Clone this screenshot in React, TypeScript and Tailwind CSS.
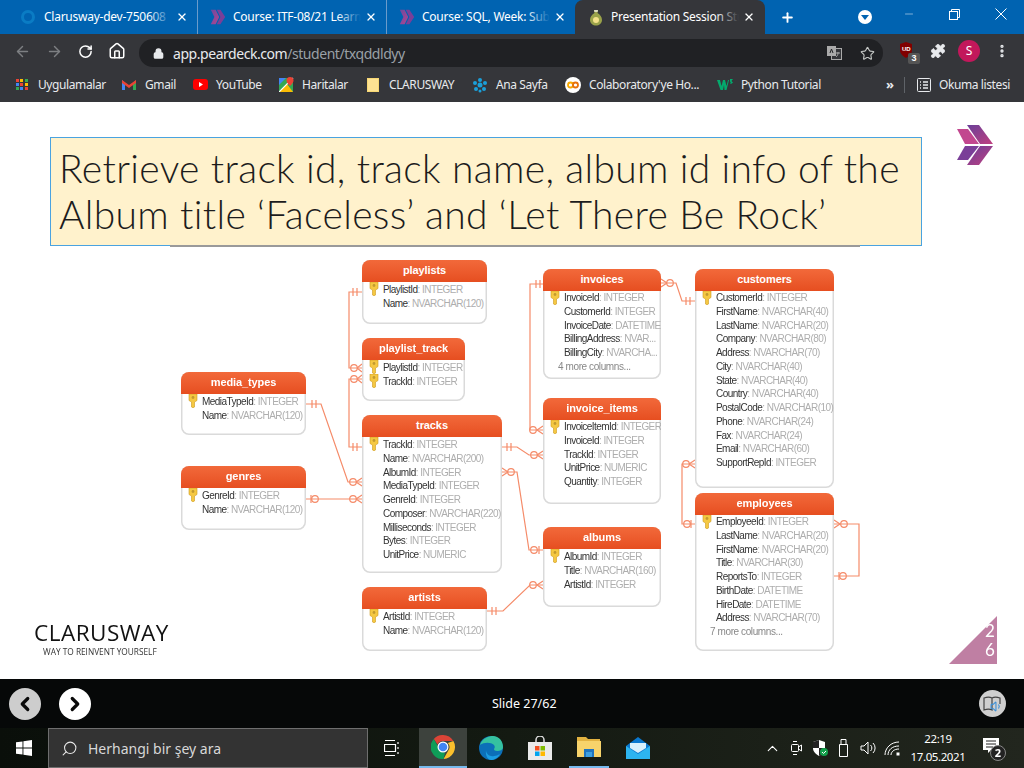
import React from "react";
import { ArrowLeft, ArrowRight, RotateCw, Home, Lock, Star, Puzzle, X, Plus, Minus, ChevronLeft, ChevronRight, ChevronUp, Search, Volume1, EllipsisVertical } from "lucide-react";

const ui = "font-['Noto_Sans','Open_Sans',sans-serif]";

function PearLogo({ c = "#7b3f98" }: { c?: string }) {
  return (
    <svg width="18" height="16" viewBox="0 0 36 40">
      <defs>
        <linearGradient id="tabch" x1="0" y1="0" x2="1" y2="1">
          <stop offset="0" stopColor="#6d4aa0" />
          <stop offset="1" stopColor="#b2458f" />
        </linearGradient>
      </defs>
      <path d="M0 2h12l9 18-9 18H0l9-18z" fill="url(#tabch)" />
      <path d="M15 2h9l12 18-12 18h-9l9-18z" fill={c} />
    </svg>
  );
}

function Tab({ title, icon, sep = true, active = false, w = "w-[189px]", pl = "pl-[11px]" }: { title: string; icon: React.ReactNode; sep?: boolean; active?: boolean; w?: string; pl?: string }) {
  return (
    <div className={`relative flex items-center h-[34px] shrink-0 ${w} ${pl} ${active ? "bg-[#35363a] rounded-t-[8px]" : ""} ${sep ? "border-r border-[#6a9bcb]" : ""}`}>
      <div className="w-[18px] flex justify-center shrink-0">{icon}</div>
      <div className="relative ml-[6px] w-[128px] overflow-hidden whitespace-nowrap text-[12px] tracking-[-0.25px] text-white leading-[34px]">
        {title}
        <div className={`absolute right-0 top-0 bottom-0 w-[24px] bg-gradient-to-r from-transparent ${active ? "to-[#35363a]" : "to-[#0063b1]"}`} />
      </div>
      <X size={12} strokeWidth={2.6} className="text-white ml-[4px] shrink-0" />
    </div>
  );
}

function TabBar() {
  return (
    <div className="flex items-center h-[34px] bg-[#0063b1]">
      <Tab
        title="Clarusway-dev-750608"
        w="w-[198px]"
        pl="pl-[20px]"
        icon={<svg width="16" height="16" viewBox="0 0 16 16"><circle cx="7" cy="8" r="5.500" fill="none" stroke="#0a7cc4" strokeWidth="3" /></svg>}
      />
      <Tab title="Course: ITF-08/21 Learn" icon={<PearLogo />} />
      <Tab title="Course: SQL, Week: Sub" icon={<PearLogo />} w="w-[188px]" sep={false} />
      <Tab
        title="Presentation Session Stu"
        active
        w="w-[190px]"
        pl="pl-[12px]"
        sep={false}
        icon={
          <svg width="14" height="19" viewBox="0 0 14 17">
            <path d="M5 1h4L8.500 4C11 5.500 13 8 13 11c0 3.500-3 5.500-6 5.500S1 14.500 1 11c0-3 2-5.500 4.500-7z" fill="#9aa24a" />
            <circle cx="7" cy="11" r="3" fill="#f4e28a" />
            <path d="M5 1h4l-.4 2H5.400z" fill="#d9d9c0" />
          </svg>
        }
      />
      <Plus size={15} strokeWidth={3} className="text-white ml-[15px]" />
      <div className="flex-1" />
      <div className="w-[14px] h-[14px] rounded-full bg-white flex items-center justify-center mr-[31px]">
        <div className="w-0 h-0 border-l-[4px] border-r-[4px] border-t-[5px] border-l-transparent border-r-transparent border-t-[#0063b1]" />
      </div>
      <Minus size={12} strokeWidth={1} className="text-white mr-[34px] -mt-[6px]" />
      <svg width="11" height="11" viewBox="0 0 11 11" className="mr-[35px] -mt-[6px]" fill="none" stroke="#fff">
        <rect x="0.5" y="2.5" width="8" height="8" />
        <path d="M2.500 2.500V.5h8v8H8.500" />
      </svg>
      <svg width="12" height="12" viewBox="0 0 12 12" className="mr-[17px] -mt-[6px]" stroke="#fff"><path d="M.5.5l11 11M11.500.5l-11 11" /></svg>
    </div>
  );
}

function Toolbar() {
  return (
    <div className="flex items-center h-[34px] bg-[#35363a]">
      <ArrowLeft size={17} strokeWidth={2} className="text-[#7d7f82] ml-[14px]" />
      <ArrowRight size={17} strokeWidth={2} className="text-[#7d7f82] ml-[15px]" />
      <RotateCw size={15} strokeWidth={2.400} className="text-white ml-[15px]" />
      <Home size={18} strokeWidth={2} className="text-white ml-[15px]" />
      <div className="ml-[13px] mt-[4px] flex items-center w-[744px] h-[28px] rounded-full bg-[#202124] pl-[14px] pr-[8px]">
        <Lock size={11} strokeWidth={3} fill="#e8eaed" className="text-[#e8eaed]" />
        <div className="ml-[9px] text-[14px] tracking-[-0.45px] text-[#9aa0a6] whitespace-nowrap">
          <span className="text-[#e8eaed]">app.peardeck.com</span>/student/txqddldyy
        </div>
        <div className="flex-1" />
        <svg width="15" height="14" viewBox="0 0 15 14" className="mr-[18px]">
          <rect x="4.500" y="2.500" width="10" height="11" fill="#35363a" stroke="#aaa" />
          <rect x="0" y="0" width="9" height="10" fill="#aaa" />
          <path d="M3 7l1.500-4L6 7" stroke="#202124" fill="none" />
          <path d="M9 7h4M11 6v1c0 2-1 3-2 4" stroke="#aaa" fill="none" />
        </svg>
        <Star size={15} strokeWidth={1.800} className="text-[#c4c7c5]" />
      </div>
      <div className="relative ml-[16px] w-[16px] h-[18px]">
        <svg width="14" height="16" viewBox="0 0 14 16"><path d="M1 2l6-2 6 2v6c0 4-3 6-6 8-3-2-6-4-6-8z" fill="#800000" /></svg>
        <span className="absolute left-[3px] top-[2px] text-[6px] font-bold leading-[10px] text-white font-['Liberation_Sans',sans-serif]">UD</span>
        <span className="absolute left-[9px] top-[11px] w-[12px] h-[11px] bg-[#555] rounded-[2px] text-[9px] leading-[11px] text-center text-white font-['Liberation_Sans',sans-serif] font-bold">3</span>
      </div>
      <Puzzle size={16} fill="#e8eaed" strokeWidth={1} className="text-[#e8eaed] ml-[15px]" />
      <div className="ml-[12px] w-[22px] h-[22px] rounded-full bg-[#c2185b] text-white text-[12px] flex items-center justify-center">S</div>
      <EllipsisVertical size={16} strokeWidth={3} className="text-[#e8eaed] ml-[14px]" />
    </div>
  );
}

function Bookmark({ icon, label, w }: { icon: React.ReactNode; label: string; w: string }) {
  return (
    <div className={`flex items-center shrink-0 ${w}`}>
      <div className="w-[16px] flex justify-center shrink-0">{icon}</div>
      <span className="ml-[8px] text-[12px] tracking-[-0.4px] text-[#e8eaed] whitespace-nowrap">{label}</span>
    </div>
  );
}

function Bookmarks() {
  const colors = ["#ea4335", "#fbbc04", "#34a853", "#4285f4", "#ea4335", "#fbbc04", "#34a853", "#4285f4", "#ea4335"];
  return (
    <div className="flex items-center h-[34px] bg-[#35363a] pl-[14px] pb-[1px]">
      <Bookmark
        w="w-[107px]"
        label="Uygulamalar"
        icon={
          <div className="grid grid-cols-3 gap-[1px] w-[13px]">
            {colors.map((c, i) => (
              <div key={i} className="w-[3px] h-[3px]" style={{ backgroundColor: c }} />
            ))}
          </div>
        }
      />
      <Bookmark
        w="w-[71px]"
        label="Gmail"
        icon={
          <svg width="14" height="11" viewBox="0 0 14 11">
            <path d="M0 1v10h3V4z" fill="#4285f4" />
            <path d="M14 1v10h-3V4z" fill="#34a853" />
            <path d="M0 1l7 5 7-5v3L7 9 0 4z" fill="#ea4335" />
          </svg>
        }
      />
      <Bookmark
        w="w-[86px]"
        label="YouTube"
        icon={
          <svg width="15" height="11" viewBox="0 0 15 11">
            <rect width="15" height="11" rx="3" fill="#f00" />
            <path d="M6 3l4 2.500L6 8z" fill="#fff" />
          </svg>
        }
      />
      <Bookmark
        w="w-[87px]"
        label="Haritalar"
        icon={
          <svg width="15" height="15" viewBox="0 0 15 15">
            <rect width="14" height="14" y="1" fill="#34a853" />
            <path d="M0 15L8 7l6 8z" fill="#fbbc04" />
            <path d="M0 1h7L0 8z" fill="#4285f4" />
            <path d="M0 15L14 1" stroke="#fff" strokeWidth="1.200" />
            <path d="M11 0a3.500 3.500 0 0 1 3.500 3.500C14.500 6 11 9 11 9S7.500 6 7.500 3.500A3.500 3.500 0 0 1 11 0z" fill="#ea4335" />
          </svg>
        }
      />
      <Bookmark
        w="w-[107px]"
        label="CLARUSWAY"
        icon={<div className="w-[12px] h-[14px] bg-[#fde293] border border-[#f7d774]" />}
      />
      <Bookmark
        w="w-[93px]"
        label="Ana Sayfa"
        icon={
          <svg width="16" height="16" viewBox="0 0 16 16" fill="#1a9fd8">
            <circle cx="8" cy="3" r="2" /><circle cx="3" cy="6" r="2" /><circle cx="13" cy="6" r="2" /><circle cx="8" cy="8" r="2.500" /><circle cx="4" cy="12" r="2" /><circle cx="12" cy="12" r="2" /><circle cx="8" cy="14" r="1.500" />
          </svg>
        }
      />
      <Bookmark
        w="w-[152px]"
        label="Colaboratory'ye Ho..."
        icon={
          <svg width="16" height="16" viewBox="0 0 16 16">
            <circle cx="8" cy="8" r="8" fill="#fff" />
            <circle cx="5.500" cy="8" r="2.500" fill="none" stroke="#f9ab00" strokeWidth="1.800" />
            <circle cx="10.500" cy="8" r="2.500" fill="none" stroke="#e8710a" strokeWidth="1.800" />
          </svg>
        }
      />
      <Bookmark
        w="w-[169px]"
        label="Python Tutorial"
        icon={
          <svg width="16" height="12" viewBox="0 0 16 12">
            <path d="M0 1h3l1.500 6L6 1h2l1.500 6L11 1h1L9.500 11h-2L7 6l-1 5H3.500z" fill="#04aa6d" />
            <path d="M13 0h3l-1.500 2L16 3.500 14 5l-1-.8.8-.7-.8-1z" fill="#04aa6d" />
          </svg>
        }
      />
      <span className="text-[#e8eaed] text-[13px] font-bold w-[18px]">»</span>
      <div className="w-px h-[16px] bg-[#5f6368] mr-[12px]" />
      <svg width="14" height="14" viewBox="0 0 14 14" fill="none" stroke="#e8eaed">
        <rect x=".5" y=".5" width="13" height="13" rx="1" />
        <path d="M3 4h1M3 7h1M3 10h1M6 4h5M6 7h5M6 10h5" strokeWidth="1.400" />
      </svg>
      <span className="ml-[8px] text-[12px] tracking-[-0.4px] text-[#e8eaed] whitespace-nowrap">Okuma listesi</span>
    </div>
  );
}

function Key({ className }: { className: string }) {
  return (
    <svg width="10" height="14" viewBox="0 0 10 14" className={`absolute ${className}`}>
      <path d="M1 0h8v6.500L6.500 8v5L5 14 3.500 13V8L1 6.500z" fill="#f5c842" stroke="#cf9a22" strokeWidth=".6" />
      <circle cx="5" cy="3.500" r="1.400" fill="#c39a30" />
    </svg>
  );
}

type Row = [string, string];

function Table({ title, rows, more, keys = 1, pt = "pt-[1px]", className }: { title: string; rows: Row[]; more?: string; keys?: number; pt?: string; className: string }) {
  return (
    <div className={`absolute bg-white rounded-[8px] shadow-[inset_0_0_0_1.5px_#dadada] ${className}`}>
      <div className="h-[22px] rounded-t-[8px] bg-gradient-to-b from-[#f2693a] to-[#e64e20] text-center text-white font-bold text-[11px] leading-[21px] tracking-[-0.1px]">
        {title}
      </div>
      <Key className="left-[7px] top-[22px]" />
      {keys > 1 && <Key className="left-[7px] top-[36px]" />}
      <div className={`overflow-hidden rounded-b-[8px] pl-[21px] pr-[1px] ${pt}`}>
        {rows.map(([n, t]) => (
          <div key={n} className="h-[13.750px] leading-[13.750px] text-[10px] tracking-[-0.55px] whitespace-nowrap">
            <span className="text-[#333]">{n}</span>
            <span className="text-[#aeaeae]">: {t}</span>
          </div>
        ))}
        {more && <div className="h-[13.750px] leading-[13.750px] text-[10px] tracking-[-0.4px] -ml-[6px] text-[#888]">{more}</div>}
      </div>
    </div>
  );
}

function Links() {
  const c = (x: number, y: number) => <circle cx={x} cy={y} r="3.300" />;
  return (
    <svg viewBox="0 102 1024 577" width="1024" height="577" className="absolute left-0 top-0" fill="none" stroke="#f58b69" strokeWidth="1.200">
      <path d="M362 292H349V368H362" />
      <path d="M353 288v8M357 288v8" />
      <path d="M362 379H349V447H362" />
      <path d="M353 443v8M357 443v8" />
      {c(354, 368)}
      {c(354, 379)}
      <path d="M357 368l5-4M357 368l5 4M357 379l5-4M357 379l5 4" />
      <path d="M306 404H321L348 482H362" />
      <path d="M312 400v8M316 400v8" />
      {c(353, 482)}
      <path d="M356 482l6-4M356 482l6 4" />
      <path d="M306 499H362" />
      <path d="M311 495v8" />
      {c(315, 499)}
      {c(353, 499)}
      <path d="M356 499l6-4M356 499l6 4" />
      <path d="M502 447H517L529 455H543" />
      <path d="M507 443v8M511 443v8" />
      {c(534, 455)}
      <path d="M537 455l6-4M537 455l6 4" />
      <path d="M502 472H517L529 550H543" />
      <path d="M502 468l6 4M502 476l6-4" />
      {c(511, 472)}
      {c(534, 550)}
      <path d="M539 546v8" />
      <path d="M487 611H503L530 585H543" />
      <path d="M492 607v8M496 607v8" />
      {c(533, 585)}
      <path d="M537 585l6-4M537 585l6 4" />
      <path d="M661 283H676L682 301H695" />
      <path d="M661 279l6 4M661 287l6-4" />
      {c(670, 283)}
      <path d="M686 297v8M690 297v8" />
      <path d="M543 284H530V430H543" />
      <path d="M536 280v8M540 280v8" />
      {c(533, 430)}
      <path d="M537 430l6-4M537 430l6 4" />
      <path d="M695 464H682V524H695" />
      {c(686, 464)}
      <path d="M689 464l6-4M689 464l6 4" />
      {c(687, 524)}
      <path d="M691 520v8" />
      <path d="M834 524H859V576H834" />
      <path d="M834 520l6 4M834 528l6-4" />
      {c(844, 524)}
      {c(843, 576)}
      <path d="M839 572v8" />
    </svg>
  );
}

function Diagram() {
  return (
    <div className="absolute inset-0 blur-[0.3px] font-['Liberation_Sans',sans-serif]">
      <Links />
      <Table className="left-[362px] top-[158px] w-[125px] h-[64px]" title="playlists" rows={[["PlaylistId", "INTEGER"], ["Name", "NVARCHAR(120)"]]} />
      <Table className="left-[362px] top-[236px] w-[103px] h-[63px]" title="playlist_track" keys={2} rows={[["PlaylistId", "INTEGER"], ["TrackId", "INTEGER"]]} />
      <Table className="left-[181px] top-[270px] w-[125px] h-[63px]" title="media_types" rows={[["MediaTypeId", "INTEGER"], ["Name", "NVARCHAR(120)"]]} />
      <Table className="left-[181px] top-[364px] w-[125px] h-[64px]" title="genres" rows={[["GenreId", "INTEGER"], ["Name", "NVARCHAR(120)"]]} />
      <Table
        className="left-[362px] top-[313px] w-[140px] h-[158px]"
        title="tracks"
        rows={[["TrackId", "INTEGER"], ["Name", "NVARCHAR(200)"], ["AlbumId", "INTEGER"], ["MediaTypeId", "INTEGER"], ["GenreId", "INTEGER"], ["Composer", "NVARCHAR(220)"], ["Milliseconds", "INTEGER"], ["Bytes", "INTEGER"], ["UnitPrice", "NUMERIC"]]}
      />
      <Table className="left-[362px] top-[485px] w-[125px] h-[64px]" title="artists" rows={[["ArtistId", "INTEGER"], ["Name", "NVARCHAR(120)"]]} />
      <Table
        className="left-[543px] top-[167px] w-[118px] h-[110px]"
        title="invoices"
        more="4 more columns..."
        pt="pt-0"
        rows={[["InvoiceId", "INTEGER"], ["CustomerId", "INTEGER"], ["InvoiceDate", "DATETIME"], ["BillingAddress", "NVAR..."], ["BillingCity", "NVARCHA..."]]}
      />
      <Table
        className="left-[543px] top-[296px] w-[118px] h-[106px]"
        title="invoice_items"
        pt="pt-0"
        rows={[["InvoiceItemId", "INTEGER"], ["InvoiceId", "INTEGER"], ["TrackId", "INTEGER"], ["UnitPrice", "NUMERIC"], ["Quantity", "INTEGER"]]}
      />
      <Table className="left-[543px] top-[425px] w-[118px] h-[80px]" title="albums" rows={[["AlbumId", "INTEGER"], ["Title", "NVARCHAR(160)"], ["ArtistId", "INTEGER"]]} />
      <Table
        className="left-[695px] top-[167px] w-[139px] h-[219px]"
        title="customers"
        pt="pt-0"
        rows={[["CustomerId", "INTEGER"], ["FirstName", "NVARCHAR(40)"], ["LastName", "NVARCHAR(20)"], ["Company", "NVARCHAR(80)"], ["Address", "NVARCHAR(70)"], ["City", "NVARCHAR(40)"], ["State", "NVARCHAR(40)"], ["Country", "NVARCHAR(40)"], ["PostalCode", "NVARCHAR(10)"], ["Phone", "NVARCHAR(24)"], ["Fax", "NVARCHAR(24)"], ["Email", "NVARCHAR(60)"], ["SupportRepId", "INTEGER"]]}
      />
      <Table
        className="left-[695px] top-[391px] w-[139px] h-[158px]"
        title="employees"
        more="7 more columns..."
        pt="pt-0"
        rows={[["EmployeeId", "INTEGER"], ["LastName", "NVARCHAR(20)"], ["FirstName", "NVARCHAR(20)"], ["Title", "NVARCHAR(30)"], ["ReportsTo", "INTEGER"], ["BirthDate", "DATETIME"], ["HireDate", "DATETIME"], ["Address", "NVARCHAR(70)"]]}
      />
    </div>
  );
}

function Slide() {
  return (
    <div className="relative h-[577px] bg-white overflow-hidden">
      <div className="absolute left-[50px] top-[35px] w-[872px] h-[109px] bg-[#fff2cc] border border-[#4aa3e0] pl-[8px] pt-[7px] font-['Lato',sans-serif] font-light text-[39px] tracking-[0.35px] leading-[46px] text-[#1c1c1c] whitespace-nowrap">
        <div>Retrieve track id, track name, album id info of the</div>
        <div>Album title ‘Faceless’ and ‘Let There Be Rock’</div>
      </div>
      <div className="absolute left-[170px] top-[143px] w-[690px] h-[2px] bg-[#9a9a9a]" />
      <svg width="38" height="42" viewBox="0 0 38 42" className="absolute left-[956px] top-[22px]">
        <defs>
          <linearGradient id="ch" x1="0" y1="0" x2="1" y2="1">
            <stop offset="0" stopColor="#6a3f99" />
            <stop offset="1" stopColor="#c0407f" />
          </linearGradient>
        </defs>
        <path d="M1 5h11l11 15H9z" fill="#c2478f" />
        <path d="M9 22h14L12 36H1z" fill="#7a3f98" />
        <path d="M11 1h12l14 19H24z" fill="url(#ch)" />
        <path d="M24 22h13L23 41H11z" fill="url(#ch)" />
      </svg>
      <Diagram />
      <div className="absolute left-[34px] top-[518px] font-['Open_Sans',sans-serif] text-[22.500px] leading-[26px] text-[#111] tracking-[0.5px]">CLARUSWAY</div>
      <div className="absolute left-[43px] top-[545px] font-['Open_Sans',sans-serif] text-[8.300px] leading-[9px] text-[#333] whitespace-nowrap">WAY TO REINVENT YOURSELF</div>
      <svg width="48" height="48" viewBox="0 0 48 48" className="absolute left-[949px] top-[514px]"><path d="M48 0v48H0z" fill="#bf7fa3" /></svg>
      <div className="absolute left-[984px] top-[519px] w-[12px] text-center font-['Lato',sans-serif] text-[17px] leading-[19px] text-white">2<br />6</div>
    </div>
  );
}

function SlideBar() {
  return (
    <div className="flex items-center h-[49px] bg-[#060808] text-white pl-[9px] pr-[18px]">
      <button className="w-[32px] h-[32px] rounded-full bg-[#cdcdcd] flex items-center justify-center">
        <ChevronLeft size={22} strokeWidth={3.500} className="text-[#0a0a0a]" />
      </button>
      <button className="ml-[18px] w-[32px] h-[32px] rounded-full bg-white flex items-center justify-center">
        <ChevronRight size={22} strokeWidth={3.500} className="text-[#0a0a0a]" />
      </button>
      <div className="flex-1 pl-[401px] pt-[2px] text-[12.500px] whitespace-nowrap">Slide 27/62</div>
      <div className="relative w-[27px] h-[27px] rounded-full bg-[#cfcfcf] flex items-center justify-center">
        <svg width="19" height="16" viewBox="0 0 19 16" fill="none" stroke="#444" strokeWidth="1.200">
          <path d="M1 2c3-1 6-1 8 0v12c-2-1-5-1-8 0zM9 2c2-1 5-1 8 0v6" />
        </svg>
        <Volume1 size={13} className="absolute left-[11px] top-[10px] text-[#3c8fd6]" />
      </div>
    </div>
  );
}

function Tray({ children }: { children: React.ReactNode }) {
  return <div className="w-[24px] flex items-center justify-center shrink-0">{children}</div>;
}

function Taskbar() {
  return (
    <div className="flex items-center h-[40px] bg-gradient-to-r from-[#0a0f0a] via-[#141a12] to-[#22261e] text-white">
      <svg width="16" height="16" viewBox="0 0 16 16" className="ml-[16px]" fill="#fff">
        <path d="M0 2.300L6.500 1.400V7.600H0zM7.400 1.300L16 0V7.600H7.400zM0 8.400H6.500V14.600L0 13.700zM7.400 8.400H16V16L7.400 14.700z" />
      </svg>
      <div className="ml-[16px] flex items-center w-[320px] h-[40px] bg-[#333] border border-[#6e6e6e] pl-[12px]">
        <Search size={17} strokeWidth={1.500} className="text-[#e8e8e8] -scale-x-100" />
        <span className="ml-[10px] text-[14px] text-[#d8d8d8]">Herhangi bir şey ara</span>
      </div>
      <svg width="16" height="16" viewBox="0 0 16 16" fill="none" stroke="#fff" className="ml-[16px]">
        <path d="M1 .5h10M1 15.500h10M.5 4.500h11v7H.5zM14 2v2M14 7v2M14 12v2" strokeWidth="1.200" />
      </svg>
      <div className="ml-[19px] flex items-center justify-center w-[48px] h-[40px] bg-[#3d423d] border-b-[2px] border-[#76b9ed]">
        <svg width="24" height="24" viewBox="0 0 24 24">
          <path d="M12 0a12 12 0 0 1 10.400 6H12a6 6 0 0 0-5.500 3.500L2.800 4A12 12 0 0 1 12 0z" fill="#db4437" />
          <path d="M22.400 6A12 12 0 0 1 12.500 24l4.800-8.500A6 6 0 0 0 16.800 8z" fill="#fbc02d" />
          <path d="M12.500 24A12 12 0 0 1 2.800 4l4.800 8.500a6 6 0 0 0 6.500 5z" fill="#0f9d58" />
          <circle cx="12" cy="12" r="5.500" fill="#fff" />
          <circle cx="12" cy="12" r="4.300" fill="#4285f4" />
        </svg>
      </div>
      <div className="w-[48px] flex justify-center">
        <svg width="24" height="24" viewBox="0 0 24 24">
          <circle cx="12" cy="12" r="12" fill="#0c6fb8" />
          <path d="M1 9C3 2 10 0 14 0c6 0 10 5 10 11 0 3-3 4-6 4-2 0-3-1-3-2 1-1 1-3 0-4-3-3-10-3-14 0z" fill="#35c1a0" />
          <path d="M7 14c0 4 4 7 8 6 2 0 4-1 6-2-2 4-6 6-9 6-2 0-6-3-5-10z" fill="#1b9de2" />
        </svg>
      </div>
      <div className="w-[50px] flex justify-center">
        <svg width="24" height="24" viewBox="0 0 24 24">
          <path d="M8 7V4a4 4 0 0 1 8 0v3" fill="none" stroke="#ddd" strokeWidth="1.500" />
          <rect x="0" y="6" width="24" height="18" fill="#eaeaea" />
          <rect x="7" y="10" width="4.500" height="4.500" fill="#f25022" />
          <rect x="12.500" y="10" width="4.500" height="4.500" fill="#7fba00" />
          <rect x="7" y="15.500" width="4.500" height="4.500" fill="#00a4ef" />
          <rect x="12.500" y="15.500" width="4.500" height="4.500" fill="#ffb900" />
        </svg>
      </div>
      <div className="ml-[4px] w-[40px] h-[40px] flex items-center justify-center border-b-[2px] border-[#76b9ed]">
        <svg width="24" height="20" viewBox="0 0 24 20">
          <path d="M0 0h9l2 2h12v4H0z" fill="#e3b341" />
          <rect y="4" width="24" height="16" fill="#f7d36b" />
          <path d="M7 12h10v8h-2v-5H9v5H7z" fill="#1f74bf" />
          <rect x="9" y="15" width="6" height="5" fill="#3fa0e0" />
        </svg>
      </div>
      <div className="ml-[5px] w-[48px] flex justify-center">
        <svg width="24" height="22" viewBox="0 0 24 22">
          <path d="M12 0l12 9v13H0V9z" fill="#0a78cf" />
          <path d="M0 9l12 8 12-8v13H0z" fill="#2db4f0" />
          <path d="M4 6h16v5l-8 5-8-5z" fill="#d8f0fc" />
        </svg>
      </div>
      <div className="flex-1" />
      <Tray><ChevronUp size={17} strokeWidth={1.600} className="text-white" /></Tray>
      <Tray>
        <svg width="12" height="16" viewBox="0 0 12 16" fill="none" stroke="#fff">
          <rect x="1.500" y="4.500" width="7" height="7" rx="1" /><path d="M8.500 7l3-2v6l-3-2M3 1.500h4M3 14.500h4" />
        </svg>
      </Tray>
      <Tray>
        <svg width="16" height="16" viewBox="0 0 16 16">
          <path d="M1 2l6-2 6 2v6c0 4-3 6-6 8-3-2-6-4-6-8z" fill="#fff" />
          <path d="M7 0v8H1V2zM7 8h6c0 4-3 6-6 8z" fill="#222" />
          <circle cx="12" cy="12" r="4" fill="#13a04b" />
          <path d="M10 12l1.500 1.500L14 11" stroke="#fff" fill="none" />
        </svg>
      </Tray>
      <Tray>
        <svg width="13" height="18" viewBox="0 0 13 18" fill="none" stroke="#fff">
          <path d="M3 .5h5v5H3zM1.500 5.500h8v12h-8z" />
        </svg>
      </Tray>
      <Tray>
        <svg width="17" height="14" viewBox="0 0 17 14" fill="none" stroke="#fff">
          <path d="M1 5h3l4-4v12L4 9H1zM10.500 4a4 4 0 0 1 0 6M13 2a7 7 0 0 1 0 10" />
        </svg>
      </Tray>
      <Tray>
        <svg width="16" height="15" viewBox="0 0 16 15" fill="none" stroke="#fff">
          <path d="M1 14C1 7 7 1 15 1M4 14c0-5 4-9 11-9M7 14c0-3 3-6 8-6" />
          <rect x="13" y="12" width="2" height="2" fill="#fff" />
        </svg>
      </Tray>
      <div className="w-[68px] text-center text-[11.500px] tracking-[-0.4px] leading-[18px] whitespace-nowrap text-white">
        <div>22:19</div>
        <div>17.05.2021</div>
      </div>
      <div className="relative ml-[11px] w-[24px] mr-[17px] h-[24px]">
        <svg width="16" height="16" viewBox="0 0 16 16" className="absolute left-0 top-[2px]">
          <path d="M0 0h16v12H8l-3 3v-3H0z" fill="#fff" />
          <path d="M3 3h10M3 6h10M3 9h7" stroke="#222" />
        </svg>
        <div className="absolute left-[7px] top-[9px] w-[16px] h-[16px] rounded-full border border-[#888] bg-[#222] text-[11px] leading-[14px] text-center text-white font-bold">2</div>
      </div>
    </div>
  );
}

export default function App() {
  return (
    <div className={`w-[1024px] h-[768px] overflow-hidden ${ui}`}>
      <TabBar />
      <Toolbar />
      <Bookmarks />
      <Slide />
      <SlideBar />
      <Taskbar />
    </div>
  );
}
